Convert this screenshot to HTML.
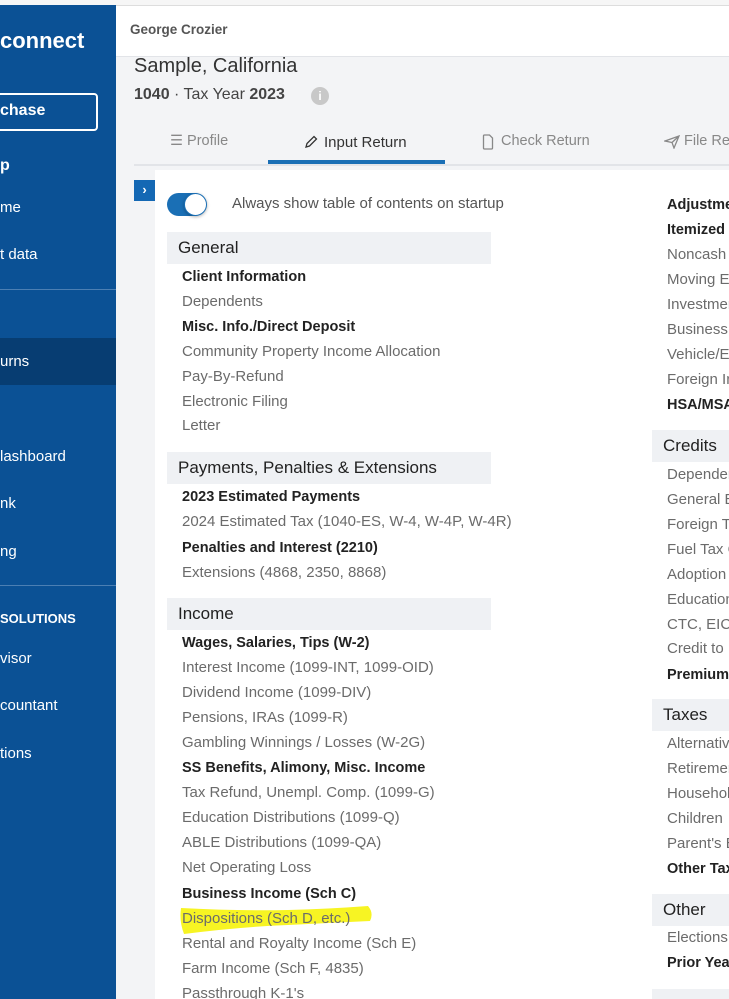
<!DOCTYPE html>
<html style="overflow:hidden;width:729px;height:999px"><head><meta charset="utf-8"><style>
*{margin:0;padding:0;box-sizing:border-box}
html,body{width:729px;height:999px;overflow:hidden}
body{position:relative;background:#f3f4f6;font-family:"Liberation Sans",sans-serif}
#w{position:absolute;left:0;top:0;width:729px;height:999px;overflow:hidden}
.a{position:absolute;white-space:nowrap}
#sb{position:absolute;left:0;top:5px;width:116px;height:994px;background:#0b5195;overflow:hidden}
.s{position:absolute;color:#fff;font-size:15px;white-space:nowrap;left:0}
.i{position:absolute;font-size:15px;color:#6b6b6b;white-space:nowrap;line-height:18px}
.b{color:#222;font-weight:bold;font-size:14.5px}
.h{position:absolute;background:#eff1f4;font-size:17px;color:#222;padding-left:11px;line-height:32px;height:32px}
</style></head><body><div id="w">
<div class="a" style="left:0;top:0;width:729px;height:5px;background:#f6f6f6"></div>
<div id="sb">
<div class="s" style="top:23px;left:0;font-size:22px;font-weight:bold">connect</div>
<div class="a" style="left:-10px;top:88px;width:108px;height:38px;border:2px solid #fff;border-radius:4px"></div>
<div class="s" style="top:97px;font-weight:bold;font-size:16px">chase</div>
<div class="s" style="top:152px;font-weight:bold;font-size:16px">p</div>
<div class="s" style="top:194px">me</div>
<div class="s" style="top:241px">t data</div>
<div class="a" style="left:0;top:284px;width:116px;height:1px;background:#4c7fb3"></div>
<div class="a" style="left:0;top:333px;width:116px;height:47px;background:#073d72"></div>
<div class="s" style="top:348px">urns</div>
<div class="s" style="top:443px">lashboard</div>
<div class="s" style="top:490px">nk</div>
<div class="s" style="top:538px">ng</div>
<div class="a" style="left:0;top:580px;width:116px;height:1px;background:#4c7fb3"></div>
<div class="s" style="top:606px;font-weight:bold;font-size:13px">SOLUTIONS</div>
<div class="s" style="top:645px">visor</div>
<div class="s" style="top:692px">countant</div>
<div class="s" style="top:740px">tions</div>
</div>
<div class="a" style="left:116px;top:5px;width:613px;height:52px;background:#fff;border-top:1px solid #ddd;border-bottom:1px solid #e2e4e8"></div>
<div class="a" style="left:130px;top:22px;font-size:13.5px;font-weight:bold;color:#555">George Crozier</div>
<div class="a" style="left:134px;top:55px;font-size:20px;color:#333">Sample, California</div>
<div class="a" style="left:134px;top:86px;font-size:16px;color:#444"><b>1040</b> · Tax Year <b>2023</b></div>
<div class="a" style="left:311px;top:87px;width:18px;height:18px;border-radius:50%;background:#c8c8c8;color:#fff;font-size:12px;font-weight:bold;text-align:center;line-height:18px">i</div>
<div class="a" style="left:134px;top:164px;width:595px;height:2px;background:#e2e4e8"></div>
<div class="a" style="left:268px;top:160px;width:177px;height:4px;background:#1a6fb5"></div>
<div class="a" style="left:170px;top:133px;font-size:14.5px;color:#888">☰ Profile</div>
<svg class="a" style="left:304px;top:135px" width="14" height="14" viewBox="0 0 14 14"><path d="M2 12 L3 8.5 L10 1.5 L12.5 4 L5.5 11 Z" fill="none" stroke="#333" stroke-width="1.3"/></svg>
<div class="a" style="left:324px;top:134px;font-size:15px;color:#333">Input Return</div>
<svg class="a" style="left:482px;top:134px" width="12" height="16" viewBox="0 0 12 16"><path d="M1.5 2 Q1.5 1 2.5 1 H7.5 L10.5 4 V14 Q10.5 15 9.5 15 H2.5 Q1.5 15 1.5 14 Z" fill="none" stroke="#888" stroke-width="1.3"/></svg>
<div class="a" style="left:501px;top:133px;font-size:14.5px;color:#888">Check Return</div>
<svg class="a" style="left:664px;top:135px" width="16" height="14" viewBox="0 0 16 14"><path d="M1 6 L15 1 L10 13 L8 7.5 Z M8 7.5 L15 1" fill="none" stroke="#888" stroke-width="1.3"/></svg>
<div class="a" style="left:684px;top:133px;font-size:14.5px;color:#888">File Re</div>
<div class="a" style="left:155px;top:170px;width:574px;height:829px;background:#fff"></div>
<div class="a" style="left:134px;top:180px;width:21px;height:21px;background:#1468b4;color:#fff;font-size:13px;font-weight:bold;text-align:center;line-height:20px">›</div>
<div class="a" style="left:167px;top:193px;width:39px;height:23px;border-radius:12px;background:#1a6fb5"></div>
<div class="a" style="left:184px;top:193px;width:23px;height:23px;border-radius:50%;background:#fff;border:1px solid #1a6fb5;box-shadow:0 1px 3px rgba(0,0,0,.3)"></div>
<div class="a" style="left:232px;top:195px;font-size:15px;color:#555">Always show table of contents on startup</div>

<div class="h" style="left:167px;top:232px;width:324px">General</div>
<div class="i b" style="left:182px;top:268px">Client Information</div>
<div class="i" style="left:182px;top:293px">Dependents</div>
<div class="i b" style="left:182px;top:318px">Misc. Info./Direct Deposit</div>
<div class="i" style="left:182px;top:343px">Community Property Income Allocation</div>
<div class="i" style="left:182px;top:368px">Pay-By-Refund</div>
<div class="i" style="left:182px;top:393px">Electronic Filing</div>
<div class="i" style="left:182px;top:417px">Letter</div>
<div class="h" style="left:167px;top:452px;width:324px">Payments, Penalties &amp; Extensions</div>
<div class="i b" style="left:182px;top:488px">2023 Estimated Payments</div>
<div class="i" style="left:182px;top:513px">2024 Estimated Tax (1040-ES, W-4, W-4P, W-4R)</div>
<div class="i b" style="left:182px;top:539px">Penalties and Interest (2210)</div>
<div class="i" style="left:182px;top:564px">Extensions (4868, 2350, 8868)</div>
<div class="h" style="left:167px;top:598px;width:324px">Income</div>
<svg class="a" style="left:178px;top:904px" width="198" height="32" viewBox="0 0 198 32"><path d="M3 4 Q60 7 110 6 Q150 5 190 2 Q196 9 192 17 Q150 19 110 21 Q60 23 6 30 Q1 17 3 4 Z" fill="#f7f423"/></svg>
<div class="i b" style="left:182px;top:634px">Wages, Salaries, Tips (W-2)</div>
<div class="i" style="left:182px;top:659px">Interest Income (1099-INT, 1099-OID)</div>
<div class="i" style="left:182px;top:684px">Dividend Income (1099-DIV)</div>
<div class="i" style="left:182px;top:709px">Pensions, IRAs (1099-R)</div>
<div class="i" style="left:182px;top:734px">Gambling Winnings / Losses (W-2G)</div>
<div class="i b" style="left:182px;top:759px">SS Benefits, Alimony, Misc. Income</div>
<div class="i" style="left:182px;top:784px">Tax Refund, Unempl. Comp. (1099-G)</div>
<div class="i" style="left:182px;top:809px">Education Distributions (1099-Q)</div>
<div class="i" style="left:182px;top:834px">ABLE Distributions (1099-QA)</div>
<div class="i" style="left:182px;top:859px">Net Operating Loss</div>
<div class="i b" style="left:182px;top:885px">Business Income (Sch C)</div>
<div class="i" style="left:182px;top:910px">Dispositions (Sch D, etc.)</div>
<div class="i" style="left:182px;top:935px">Rental and Royalty Income (Sch E)</div>
<div class="i" style="left:182px;top:960px">Farm Income (Sch F, 4835)</div>
<div class="i" style="left:182px;top:985px">Passthrough K-1's</div>

<div class="i b" style="left:667px;top:196px">Adjustments</div>
<div class="i b" style="left:667px;top:221px">Itemized</div>
<div class="i" style="left:667px;top:246px">Noncash</div>
<div class="i" style="left:667px;top:271px">Moving Expenses</div>
<div class="i" style="left:667px;top:296px">Investment</div>
<div class="i" style="left:667px;top:321px">Business</div>
<div class="i" style="left:667px;top:346px">Vehicle/Equipment</div>
<div class="i" style="left:667px;top:371px">Foreign Income</div>
<div class="i b" style="left:667px;top:396px">HSA/MSA</div>
<div class="h" style="left:652px;top:430px;width:90px">Credits</div>
<div class="i" style="left:667px;top:466px">Dependent</div>
<div class="i" style="left:667px;top:491px">General Business</div>
<div class="i" style="left:667px;top:516px">Foreign Tax</div>
<div class="i" style="left:667px;top:541px">Fuel Tax Credit</div>
<div class="i" style="left:667px;top:566px">Adoption</div>
<div class="i" style="left:667px;top:591px">Education</div>
<div class="i" style="left:667px;top:616px">CTC, EIC</div>
<div class="i" style="left:667px;top:640px">Credit to</div>
<div class="i b" style="left:667px;top:666px">Premium</div>
<div class="h" style="left:652px;top:699px;width:90px">Taxes</div>
<div class="i" style="left:667px;top:735px">Alternative</div>
<div class="i" style="left:667px;top:760px">Retirement</div>
<div class="i" style="left:667px;top:785px">Household</div>
<div class="i" style="left:667px;top:810px">Children</div>
<div class="i" style="left:667px;top:835px">Parent's Election</div>
<div class="i b" style="left:667px;top:860px">Other Taxes</div>
<div class="h" style="left:652px;top:894px;width:90px">Other</div>
<div class="i" style="left:667px;top:929px">Elections</div>
<div class="i b" style="left:667px;top:954px">Prior Year</div>
<div class="h" style="left:652px;top:989px;width:90px"></div>
</div></body></html>
